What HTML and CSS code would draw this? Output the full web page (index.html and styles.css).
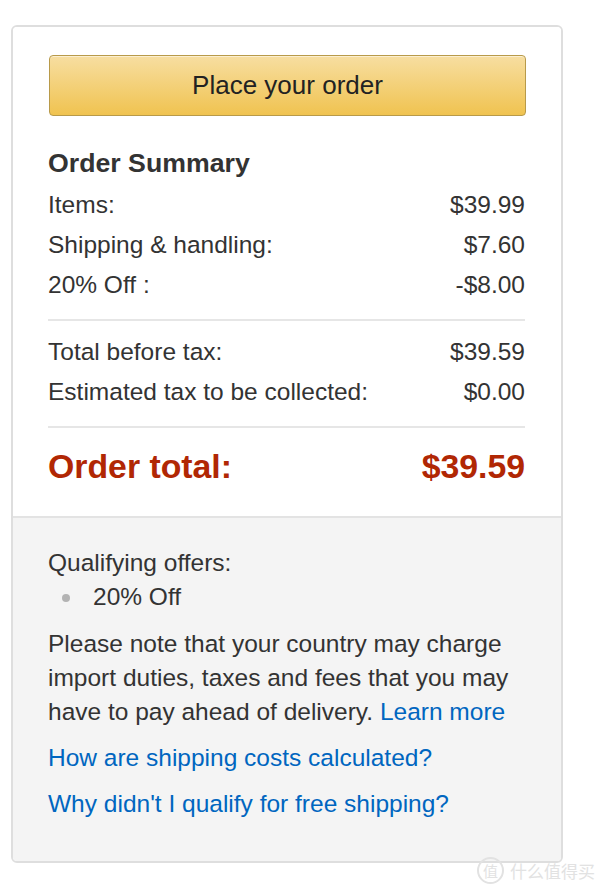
FILE: index.html
```html
<!DOCTYPE html>
<html>
<head>
<meta charset="utf-8">
<link rel="stylesheet" href="styles.css">
</head>
<body>
<div class="box">
  <div class="top">
    <button class="place">Place your order</button>
    <h2 class="heading">Order Summary</h2>
    <div class="row"><span>Items:</span><span>$39.99</span></div>
    <div class="row"><span>Shipping &amp; handling:</span><span>$7.60</span></div>
    <div class="row"><span>20% Off :</span><span>-$8.00</span></div>
    <hr class="divider">
    <div class="row"><span>Total before tax:</span><span>$39.59</span></div>
    <div class="row"><span>Estimated tax to be collected:</span><span>$0.00</span></div>
    <hr class="divider">
    <div class="row total"><span>Order total:</span><span>$39.59</span></div>
  </div>
  <div class="bottom">
    <div class="line">Qualifying offers:</div>
    <ul class="offers"><li>20% Off</li></ul>
    <p class="note">Please note that your country may charge import duties, taxes and fees that you may have to pay ahead of delivery. <a class="inline-link" href="#">Learn more</a></p>
    <a class="link" href="#">How are shipping costs calculated?</a>
    <a class="link" href="#">Why didn't I qualify for free shipping?</a>
  </div>
</div>
<div class="watermark"><span class="wm-circle">值</span><span class="wm-text">什么值得买</span></div>
</body>
</html>
```

FILE: styles.css
```css
* { box-sizing: border-box; }
html, body { margin: 0; padding: 0; background: #fff; }
body {
  font-family: "Liberation Sans", Arial, sans-serif;
  color: #333;
  width: 600px;
  height: 888px;
  position: relative;
  overflow: hidden;
}
.box {
  margin: 25px 0 0 11px;
  width: 552px;
  border: 2px solid #dedede;
  border-radius: 6px;
  overflow: hidden;
}
.top {
  padding: 28px 36px 30px 35px;
  background: #fff;
}
.place {
  display: block;
  width: 100%;
  height: 61px;
  margin: 0 0 0 1px;
  border: 1px solid #b89a4a;
  border-radius: 4px;
  background: linear-gradient(to bottom, #f7dea1, #f0c350);
  font-family: "Liberation Sans", Arial, sans-serif;
  font-size: 26px;
  color: #222;
  padding: 0;
  box-shadow: 0 1px 0 rgba(255,255,255,0.5) inset;
}
.heading {
  margin: 27px 0 2px;
  font-size: 26.7px;
  line-height: 40px;
  font-weight: bold;
  color: #333;
}
.row {
  display: flex;
  justify-content: space-between;
  font-size: 24.5px;
  line-height: 40px;
  height: 40px;
}
.divider {
  border: 0;
  height: 2px;
  background: #e6e6e6;
  margin: 14px 0 11px;
}
.divider + .row.total { margin-top: 18px; }
.row.total {
  font-size: 33.8px;
  font-weight: bold;
  color: #b12704;
}
.bottom {
  background: #f4f4f4;
  border-top: 2px solid #e3e3e3;
  padding: 28px 36px 40px 35px;
  font-size: 24.5px;
  line-height: 34px;
}
.line { height: 34px; }
.offers {
  list-style: none;
  margin: 0;
  padding: 0 0 0 45px;
}
.offers li {
  position: relative;
  height: 34px;
}
.offers li::before {
  content: "";
  position: absolute;
  left: -31px;
  top: 14px;
  width: 8px;
  height: 8px;
  border-radius: 50%;
  background: #b3b3b3;
}
.note {
  margin: 13px 0 0;
}
a { color: #0066c0; text-decoration: none; }
.link {
  display: block;
  margin-top: 12px;
  height: 34px;
}
.watermark {
  position: absolute;
  left: 477px;
  top: 857px;
  display: flex;
  align-items: center;
  gap: 6px;
  color: #e2e2e2;
  font-family: "Noto Sans CJK SC", sans-serif;
}
.wm-circle {
  width: 27px;
  height: 27px;
  border: 2px solid #e2e2e2;
  border-radius: 50%;
  display: flex;
  align-items: center;
  justify-content: center;
  font-size: 15px;
}
.wm-text { font-size: 17px; }
```
